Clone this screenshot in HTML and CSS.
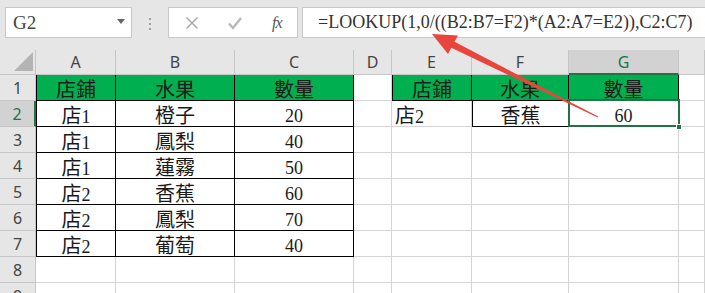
FILE: index.html
```html
<!DOCTYPE html>
<html>

<head>
  <title>LOOKUP</title>
  <link rel="stylesheet" href="styles.css">
</head>

<body>
  <div class="app">
    <div class="toolbar">
      <div class="namebox">
        <span>G2</span>
        <svg class="caret" width="8" height="5" viewBox="0 0 8 5"><path d="M0 0h8L4 5z" fill="#666"/></svg>
      </div>
      <div class="grip"><i></i><i></i><i></i></div>
      <div class="fxbtns">
        <svg width="24" height="14" viewBox="0 0 24 14"><path d="M6.5 1.5l11 11M17.5 1.5l-11 11" stroke="#a6a6a6" stroke-width="1.4"/></svg>
        <svg width="24" height="14" viewBox="0 0 24 14"><path d="M6 7.5l4 4.5 8-10" stroke="#b8b8b8" stroke-width="2.4" fill="none"/></svg>
        <span class="fx">fx</span>
      </div>
      <div class="formula">=LOOKUP(1,0/((B2:B7=F2)*(A2:A7=E2)),C2:C7)</div>
    </div>

    <div class="sheet">
      <!-- column headers -->
      <div class="corner"><svg width="19" height="19" viewBox="0 0 19 19"><path d="M19 0V19H0z" fill="#b4b4b4"/></svg></div>
      <div class="ch">A</div>
      <div class="ch">B</div>
      <div class="ch">C</div>
      <div class="ch">D</div>
      <div class="ch">E</div>
      <div class="ch">F</div>
      <div class="ch sel">G</div>
      <div class="ch"></div>

      <!-- row 1 -->
      <div class="rh">1</div>
      <div class="c t left g">店鋪</div>
      <div class="c t g">水果</div>
      <div class="c t g">數量</div>
      <div class="c"></div>
      <div class="c t left g">店鋪</div>
      <div class="c t g">水果</div>
      <div class="c t g">數量</div>
      <div class="c"></div>

      <!-- row 2 -->
      <div class="rh sel">2</div>
      <div class="c t left">店<span class="n">1</span></div>
      <div class="c t">橙子</div>
      <div class="c t n">20</div>
      <div class="c"></div>
      <div class="c al">店<span class="n">2</span></div>
      <div class="c t left">香蕉</div>
      <div class="c t n active">60<span class="handle"></span></div>
      <div class="c"></div>

      <!-- row 3 -->
      <div class="rh">3</div>
      <div class="c t left">店<span class="n">1</span></div>
      <div class="c t">鳳梨</div>
      <div class="c t n">40</div>
      <div class="c"></div>
      <div class="c"></div>
      <div class="c"></div>
      <div class="c"></div>
      <div class="c"></div>

      <!-- row 4 -->
      <div class="rh">4</div>
      <div class="c t left">店<span class="n">1</span></div>
      <div class="c t">蓮霧</div>
      <div class="c t n">50</div>
      <div class="c"></div>
      <div class="c"></div>
      <div class="c"></div>
      <div class="c"></div>
      <div class="c"></div>

      <!-- row 5 -->
      <div class="rh">5</div>
      <div class="c t left">店<span class="n">2</span></div>
      <div class="c t">香蕉</div>
      <div class="c t n">60</div>
      <div class="c"></div>
      <div class="c"></div>
      <div class="c"></div>
      <div class="c"></div>
      <div class="c"></div>

      <!-- row 6 -->
      <div class="rh">6</div>
      <div class="c t left">店<span class="n">2</span></div>
      <div class="c t">鳳梨</div>
      <div class="c t n">70</div>
      <div class="c"></div>
      <div class="c"></div>
      <div class="c"></div>
      <div class="c"></div>
      <div class="c"></div>

      <!-- row 7 -->
      <div class="rh">7</div>
      <div class="c t left">店<span class="n">2</span></div>
      <div class="c t">葡萄</div>
      <div class="c t n">40</div>
      <div class="c"></div>
      <div class="c"></div>
      <div class="c"></div>
      <div class="c"></div>
      <div class="c"></div>

      <!-- row 8 -->
      <div class="rh">8</div>
      <div class="c"></div>
      <div class="c"></div>
      <div class="c"></div>
      <div class="c"></div>
      <div class="c"></div>
      <div class="c"></div>
      <div class="c"></div>
      <div class="c"></div>

      <!-- row 9 -->
      <div class="rh">9</div>
      <div class="c"></div>
      <div class="c"></div>
      <div class="c"></div>
      <div class="c"></div>
      <div class="c"></div>
      <div class="c"></div>
      <div class="c"></div>
      <div class="c"></div>
    </div>

    <!-- red callout arrow pointing at the formula -->
    <svg class="arrow" width="705" height="293" viewBox="0 0 705 293">
      <path d="M432 34 L448 54 L451.3 47.8 L597.8 117.4 L598.2 116.6 L454.5 41.8 L458 35.5 Z" fill="#e8453c"/>
    </svg>
  </div>
</body>

</html>
```

FILE: styles.css
```css
* {
  box-sizing: border-box;
  margin: 0;
  padding: 0;
}

body {
  background: #fff;
  font-family: 'Liberation Serif', 'Noto Sans CJK TC', serif;
  color: #1a1a1a;
}

.app {
  position: relative;
  width: 705px;
  height: 293px;
  overflow: hidden;
}

/* formula bar */
.toolbar {
  display: flex;
  height: 50px;
  padding: 7px 0 0 5px;
  background: #e6e6e6;
}

.namebox {
  display: flex;
  flex-shrink: 0;
  align-items: center;
  width: 127px;
  height: 31px;
  padding: 0 6px 0 7px;
  background: #fff;
  border: 1px solid #c8c8c8;
  font-size: 19px;
  color: #444;
}

.namebox span {
  flex: 1;
}

.caret {
  margin-top: -2px;
}

.grip {
  display: flex;
  flex-shrink: 0;
  flex-direction: column;
  align-items: center;
  gap: 3px;
  width: 36px;
  padding-top: 11px;
}

.grip i {
  width: 2px;
  height: 2px;
  background: #a0a0a0;
}

.fxbtns {
  display: flex;
  flex-shrink: 0;
  align-items: center;
  gap: 19px;
  width: 130px;
  height: 31px;
  padding-left: 11px;
  background: #fff;
  border: 1px solid #c8c8c8;
}

.fx {
  margin-left: 6px;
  font-style: italic;
  font-size: 16px;
  color: #555;
  letter-spacing: -1px;
}

.formula {
  flex: 1;
  min-width: 0;
  height: 31px;
  margin-left: 4px;
  padding-left: 15px;
  background: #fff;
  border: 1px solid #c8c8c8;
  border-right: none;
  font-size: 18px;
  line-height: 29px;
  color: #333;
  white-space: nowrap;
}

/* grid */
.sheet {
  display: grid;
  grid-template-columns: 36px 80px 119px 119px 38px 80px 97px 110px 1fr;
  grid-template-rows: 25px;
  grid-auto-rows: 26px;
}

.corner {
  display: flex;
  align-items: flex-end;
  padding: 0 0 3px 14px;
  background: #e6e6e6;
  border-right: 1px solid #c6c6c6;
  border-bottom: 1px solid #c6c6c6;
}

.ch,
.rh {
  font-family: 'Noto Sans', sans-serif;
  font-size: 16px;
  color: #444;
  background: #e6e6e6;
  text-align: center;
}

.ch {
  line-height: 24px;
  border-right: 1px solid #c6c6c6;
  border-bottom: 1px solid #c6c6c6;
}

.rh {
  line-height: 27px;
  border-right: 1px solid #c6c6c6;
  border-bottom: 1px solid #c6c6c6;
}

.ch.sel {
  background: #d2d2d2;
  color: #217346;
  border-bottom: 2px solid #217346;
}

.rh.sel {
  background: #d2d2d2;
  color: #217346;
  border-right: 2px solid #217346;
}

.c {
  position: relative;
  padding-top: 2px;
  font-size: 20px;
  line-height: 26px;
  text-align: center;
  white-space: nowrap;
  border-right: 1px solid #d4d4d4;
  border-bottom: 1px solid #d4d4d4;
}

.n {
  font-size: 18px;
}

.c.al {
  text-align: left;
  padding-left: 3px;
}

.c.t {
  border-right-color: #000;
  border-bottom-color: #000;
}

.c.left {
  border-left: 1px solid #000;
}

.c.g {
  background: #00b050;
}

.c.active::after {
  content: '';
  position: absolute;
  top: -2px;
  left: -1px;
  right: -2px;
  bottom: -1px;
  border: 2px solid #217346;
}

.handle {
  position: absolute;
  right: -4px;
  bottom: -4px;
  z-index: 1;
  width: 6px;
  height: 6px;
  background: #217346;
  border: 1px solid #fff;
}

.arrow {
  position: absolute;
  top: 0;
  left: 0;
  pointer-events: none;
}
```
